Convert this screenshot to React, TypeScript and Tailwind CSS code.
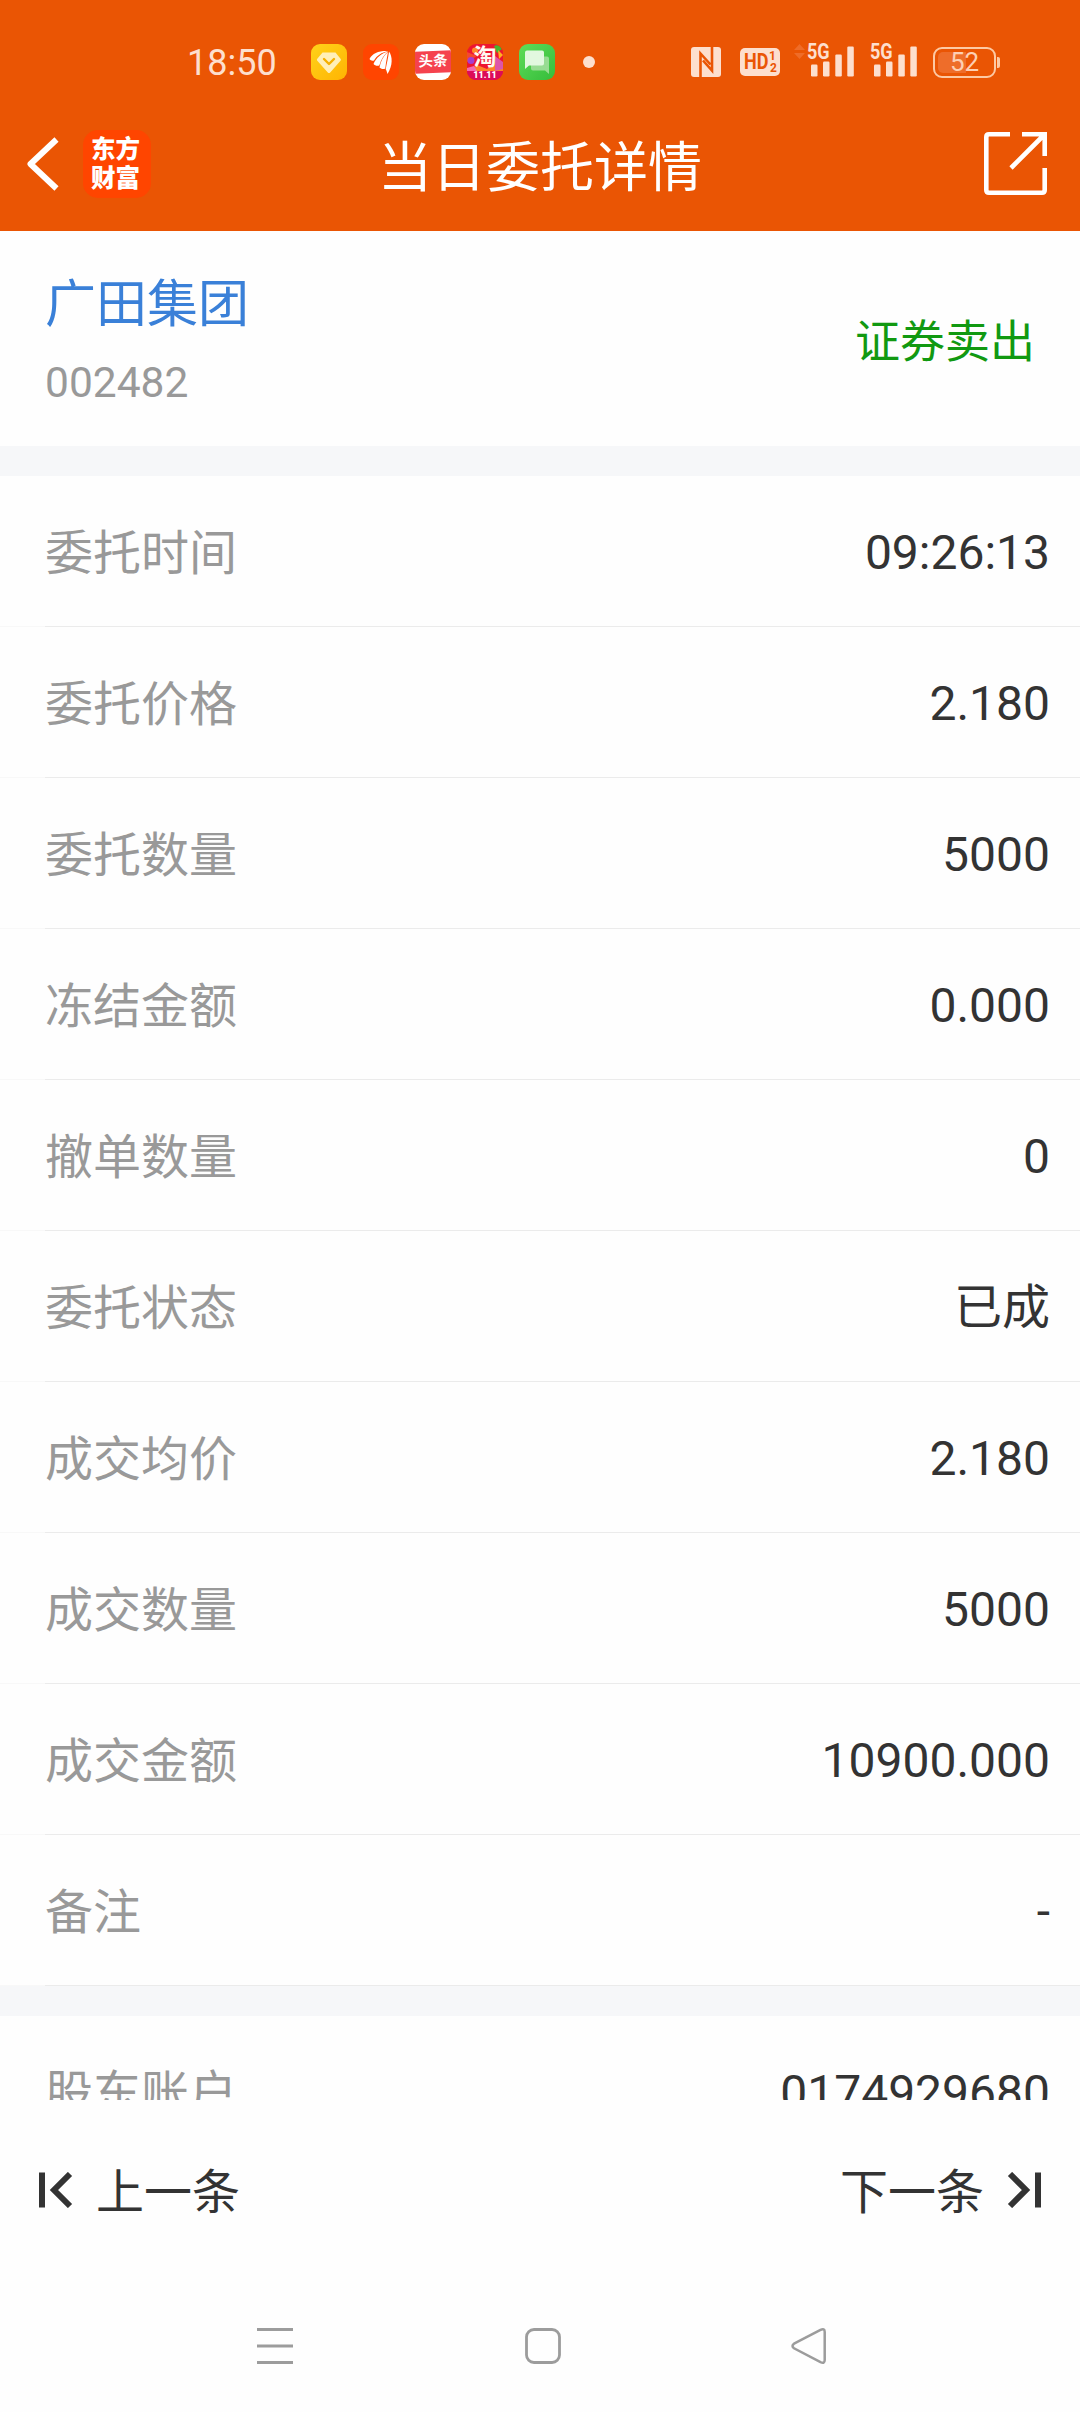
import React from 'react';

type Field = { label: string; value: string };

const orderFields: Field[] = [
  { label: '委托时间', value: '09:26:13' },
  { label: '委托价格', value: '2.180' },
  { label: '委托数量', value: '5000' },
  { label: '冻结金额', value: '0.000' },
  { label: '撤单数量', value: '0' },
  { label: '委托状态', value: '已成' },
  { label: '成交均价', value: '2.180' },
  { label: '成交数量', value: '5000' },
  { label: '成交金额', value: '10900.000' },
  { label: '备注', value: '-' },
];

const statusTint = '#fddfce';

function DiamondIcon() {
  return (
    <svg width="36" height="36" viewBox="0 0 36 36">
      <defs>
        <linearGradient id="gold" x1="0" y1="0" x2="1" y2="1">
          <stop offset="0" stopColor="#ffd21a" />
          <stop offset="1" stopColor="#ffb402" />
        </linearGradient>
      </defs>
      <rect width="36" height="36" rx="9" fill="url(#gold)" />
      <path d="M11.5 8.500h13l5 6.200c.6.8.5 1.300 0 2L19.200 28.400c-.8.9-1.600.9-2.400 0L6.300 16.700c-.5-.7-.6-1.200 0-2z" fill="#ffefb8" />
      <path d="M13 15l5 5 5-5" fill="none" stroke="#f5b000" strokeWidth="2.400" strokeLinecap="round" strokeLinejoin="round" />
    </svg>
  );
}

function WingIcon() {
  return (
    <svg width="36" height="36" viewBox="0 0 36 36">
      <rect width="36" height="36" rx="9" fill="#ff4500" />
      <g fill="#fff">
        <path d="M6.500 15C9.500 9 16 6.600 25 7 18.500 8.500 14 11.500 11 16.500c-1.800.6-3.500 0-4.500-1.500z" />
        <path d="M10.500 20C13.500 13.500 18.500 9.500 25 7.600 21 11 18 15.500 16.300 21.500c-2 .7-4.600.1-5.800-1.500z" />
        <path d="M16.500 23.500c1.200-6.500 4-12 8.500-15.500-.8 4.500-2 10-2.700 16.500-2 1-4.600.4-5.800-1z" />
        <path d="M26 7.500c3.600 5 4 14-1.500 22.500-.5-1.700-.9-3.500-1.800-4.800 1-5.700 2.500-11.200 3.300-17.700z" />
      </g>
    </svg>
  );
}

function HeadlineIcon() {
  return (
    <div className="flex h-9 w-9 items-center justify-center overflow-hidden rounded-[9px] bg-white">
      <div className="flex h-[22px] w-9 shrink-0 -skew-y-2 items-center justify-center bg-[#f5424e] text-[14.500px] font-bold leading-none whitespace-nowrap text-white">
        头条
      </div>
    </div>
  );
}

function ShoppingIcon() {
  return (
    <div className="relative h-9 w-9 overflow-hidden rounded-[9px]">
      <svg className="absolute inset-0" width="36" height="36" viewBox="0 0 36 36">
        <rect width="36" height="36" fill="#ee1530" />
        <path d="M0 18L10 12 0 8z" fill="#f5482e" />
        <circle cx="4" cy="16.500" r="3.500" fill="#a43ed0" />
        <circle cx="8" cy="6.500" r="3" fill="#ff8a2a" />
        <path d="M27 2c3-2 6 0 8 3l-5 4z" fill="#46b62e" />
        <path d="M31 6l5 5-4 4z" fill="#ffb01e" />
        <path d="M0 27l10-6 10 4 10-9 6 5v6z" fill="#ff8129" />
        <path d="M28 12l8 6v7l-8 2z" fill="#dd55a8" />
        <path d="M0 24l7-2 3 5H0z" fill="#f66ab0" />
        <path d="M0 27h36v9H0z" fill="#dc0c58" />
      </svg>
      <div className="relative pt-[2px] text-center text-[23px] font-bold leading-[24px] text-[#fffaf0]">淘</div>
      <div className="relative text-center text-[9px] font-black leading-[11px] text-white">11.11</div>
    </div>
  );
}

function MessageIcon() {
  return (
    <svg width="36" height="36" viewBox="0 0 36 36">
      <defs>
        <linearGradient id="leaf" x1="0" y1="0" x2="1" y2="1">
          <stop offset="0" stopColor="#5fdc58" />
          <stop offset="1" stopColor="#35bd3b" />
        </linearGradient>
      </defs>
      <rect width="36" height="36" rx="9" fill="url(#leaf)" />
      <path d="M14 12.500h14q2 0 2 2V30l-4-3.500H14q-2 0-2-2v-10q0-2 2-2z" fill="#98dc92" />
      <path d="M8 6.500h15q2 0 2 2v11q0 2-2 2H10L6 25V8.500q0-2 2-2z" fill="#e2f8df" />
    </svg>
  );
}

function NfcIcon() {
  return (
    <svg width="30" height="30" viewBox="0 0 30 30">
      <rect width="30" height="30" rx="3" fill={statusTint} />
      <path d="M9.500 30V6.500L19.500 17.500M21 0v23.500L12 13.500" fill="none" stroke="#ea5504" strokeWidth="2.600" />
    </svg>
  );
}

function HdIcon() {
  return (
    <div className="relative flex h-7 w-10 items-center rounded-[5px] bg-[#fddfce] pl-1 text-[#ea5504]">
      <span className="origin-left scale-x-[0.82] text-[22px] font-bold leading-none">HD</span>
      <span className="absolute top-[3px] right-[4px] text-[12px] font-bold leading-[11px]">1</span>
      <span className="absolute right-[3px] bottom-[2px] text-[12px] font-bold leading-[11px]">2</span>
    </div>
  );
}

function SignalIcon() {
  return (
    <div className="relative h-9 w-[47px]">
      <span className="absolute -top-[2px] left-0 origin-left scale-x-[0.84] text-[21.500px] font-bold leading-[20px] text-[#fddfce]">5G</span>
      <svg className="absolute inset-0" width="47" height="36" viewBox="0 0 47 36">
        <g fill={statusTint}>
          <rect x="4" y="20.500" width="6.500" height="12" rx="1.200" />
          <rect x="16" y="17.500" width="6.500" height="15" rx="1.200" />
          <rect x="28.300" y="10.500" width="6.500" height="22" rx="1.200" />
          <rect x="40.300" y="2.500" width="6.500" height="30" rx="1.200" />
        </g>
      </svg>
    </div>
  );
}

function BatteryIcon() {
  return (
    <div className="flex h-[31px] items-center">
      <div className="relative flex h-[31px] w-[63px] items-center justify-center rounded-[9px] border-2 border-[#fdc9a4]">
        <div className="absolute top-[3px] left-[3px] h-[21px] w-7 rounded-l-[5px] bg-[#ee6d2a]" />
        <span className="relative text-[26px] leading-none text-[#fdcfb4]">52</span>
      </div>
      <div className="ml-px h-[11px] w-[3px] rounded-r-[2px] bg-[#fdc9a4]" />
    </div>
  );
}

function StatusBar() {
  return (
    <div className="flex h-24 items-center pt-7">
      <span className="ml-[187px] w-[124px] pt-px text-[36px] leading-none text-[#fddfce]">18:50</span>
      <div className="flex items-center gap-4">
        <DiamondIcon />
        <WingIcon />
        <HeadlineIcon />
        <ShoppingIcon />
        <MessageIcon />
      </div>
      <div className="ml-7 h-3 w-3 rounded-full bg-[#fddfce]" />
      <div className="ml-24 flex items-center">
        <NfcIcon />
        <div className="ml-[19px]">
          <HdIcon />
        </div>
        <svg className="ml-[14px] -translate-y-[10px]" width="11" height="16" viewBox="0 0 11 16">
          <path d="M5.500 0L11 6H0zM5.500 15L0 9h11z" fill="#ef6c28" />
        </svg>
        <div className="ml-[2px]">
          <SignalIcon />
        </div>
        <div className="ml-4">
          <SignalIcon />
        </div>
        <div className="ml-4">
          <BatteryIcon />
        </div>
      </div>
    </div>
  );
}

function NavBar() {
  return (
    <div className="flex h-[135px] items-center">
      <svg className="ml-[27px]" width="32" height="54" viewBox="0 0 32 54">
        <path d="M29.500 2.500L3.500 27l26 24.500" fill="none" stroke="#fff" strokeWidth="6" strokeLinejoin="round" />
      </svg>
      <div className="ml-6 flex h-[68px] w-[68px] flex-col items-center justify-center rounded-[15px] bg-[#ff4500] pr-[3px] text-[24.500px] font-black leading-[29px] text-white">
        <span>东方</span>
        <span>财富</span>
      </div>
      <h1 className="ml-[227px] w-[324px] pt-[10px] text-[54px] leading-[60px] font-normal whitespace-nowrap text-white">当日委托详情</h1>
      <svg className="ml-auto mr-[33px]" width="63" height="63" viewBox="0 0 63 63">
        <g fill="none" stroke="#fff" strokeWidth="4.600">
          <path d="M26 2.300H5q-2.700 0-2.700 2.700v53q0 2.700 2.700 2.700h53q2.700 0 2.700-2.700V36" />
          <path d="M38 2.300h22.700V24M60 3L27 36" />
        </g>
      </svg>
    </div>
  );
}

function FieldRow({ label, value }: Field) {
  return (
    <div className="relative flex h-[151px] shrink-0 items-center justify-between pt-[3px] pr-[30px] pl-[45px] text-[48px] leading-[56px]">
      <span className="pt-[2px] text-[#999999]">{label}</span>
      <span className="text-[#333333]">{value}</span>
      <div className="absolute inset-x-0 bottom-0 flex h-px">
        <div className="w-[45px] bg-[#f8f8f8]" />
        <div className="flex-1 bg-[#ebebeb]" />
      </div>
    </div>
  );
}

function StockHeader() {
  return (
    <section className="flex h-[215px] shrink-0 items-center justify-between px-[45px]">
      <div className="flex flex-col pt-[7px]">
        <span className="text-[51px] leading-[58px] text-[#3a80d8]">广田集团</span>
        <span className="mt-6 text-[42.500px] leading-[50px] text-[#999999]">002482</span>
      </div>
      <span className="pt-[8px] text-[45px] leading-[54px] text-[#119911]">证券卖出</span>
    </section>
  );
}

function Footer() {
  return (
    <footer className="flex h-[180px] items-center justify-between pr-[39px] pl-[39px] text-[48px] leading-[56px] text-[#333333]">
      <button className="flex items-center">
        <svg width="34" height="36" viewBox="0 0 34 36">
          <path d="M0 .500h6v35H0z" fill="#333" />
          <path d="M31 2L15 18l16 16" fill="none" stroke="#333" strokeWidth="6" />
        </svg>
        <span className="ml-[23px] pt-[5px]">上一条</span>
      </button>
      <button className="flex items-center">
        <span className="mr-[23px] pt-[5px]">下一条</span>
        <svg width="34" height="36" viewBox="0 0 34 36">
          <path d="M28 .500h6v35h-6z" fill="#333" />
          <path d="M3 2l16 16L3 34" fill="none" stroke="#333" strokeWidth="6" />
        </svg>
      </button>
    </footer>
  );
}

function SystemNav() {
  return (
    <nav className="flex h-[132px] items-center pl-[257px]">
      <svg width="36" height="36" viewBox="0 0 36 36">
        <path d="M0 1.500h36M0 18h36M0 34.500h36" stroke="#9c9c9c" strokeWidth="3" />
      </svg>
      <svg className="ml-[232px]" width="36" height="36" viewBox="0 0 36 36">
        <rect x="1.500" y="1.500" width="33" height="33" rx="7.500" fill="none" stroke="#9c9c9c" strokeWidth="2.800" />
      </svg>
      <svg className="ml-[230px]" width="36" height="36" viewBox="0 0 36 36">
        <path d="M3 15.700L29.500 1.900Q33.700 0 33.700 4v28q0 4-4.200 2.100L3 20.300Q0 18 3 15.700z" fill="none" stroke="#9c9c9c" strokeWidth="2.500" />
      </svg>
    </nav>
  );
}

export default function App() {
  return (
    <div className="flex h-[2412px] w-[1080px] flex-col overflow-hidden bg-[#fefefe] font-[Roboto,'Noto_Sans_CJK_SC',sans-serif]">
      <header className="h-[231px] bg-[#ea5504]">
        <StatusBar />
        <NavBar />
      </header>
      <main className="flex h-[1869px] flex-col overflow-hidden">
        <StockHeader />
        <div className="h-[30px] shrink-0 bg-[#f6f7f9]" />
        {orderFields.map((f) => (
          <FieldRow key={f.label} label={f.label} value={f.value} />
        ))}
        <div className="h-[30px] shrink-0 bg-[#f6f7f9]" />
        <FieldRow label="股东账户" value="0174929680" />
      </main>
      <Footer />
      <SystemNav />
    </div>
  );
}
